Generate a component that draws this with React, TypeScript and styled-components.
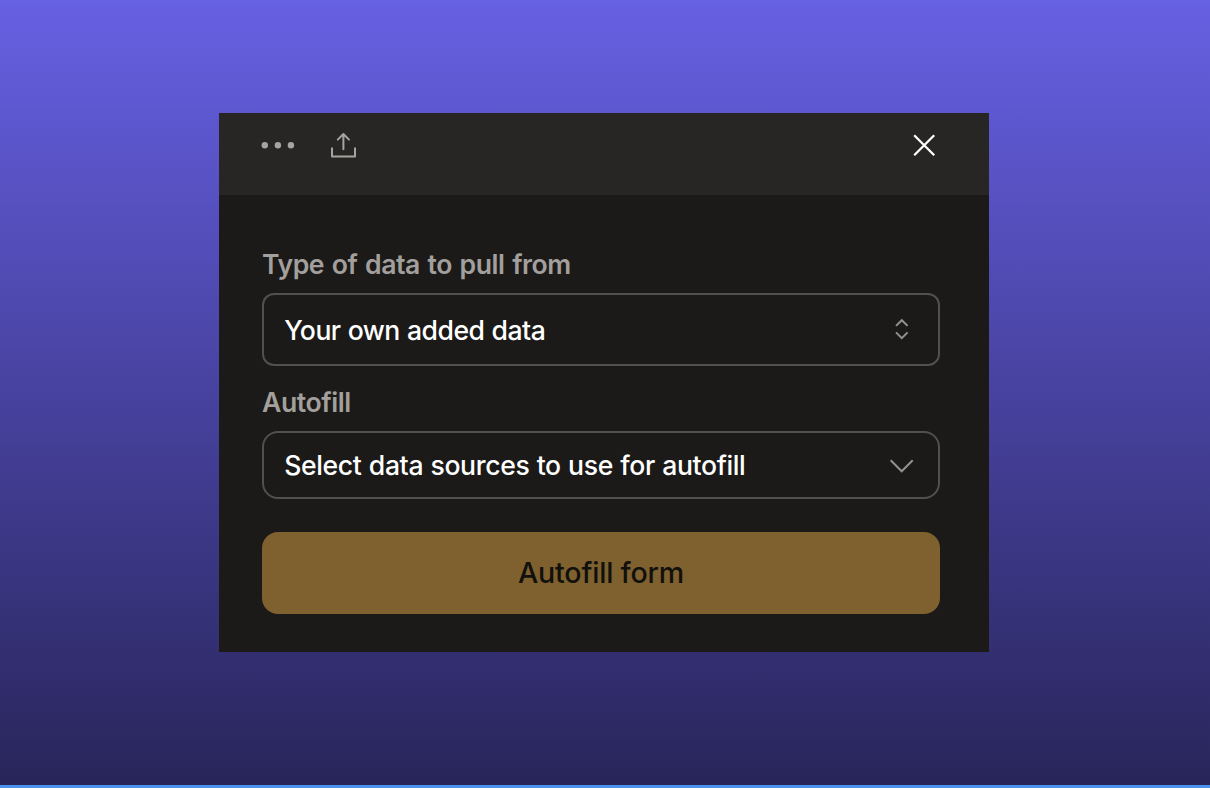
import React from 'react';
import styled, { createGlobalStyle } from 'styled-components';

const GlobalStyle = createGlobalStyle`
  * { box-sizing: border-box; }
  body { margin: 0; }
  button { font: inherit; border: 0; background: none; padding: 0; }
`;

const Page = styled.main`
  width: 100%;
  height: 100vh;
  padding: 113px 221px 0 219px;
  overflow: hidden;
  border-bottom: 3px solid #4993ec;
  background: linear-gradient(180deg, #6761e3 0%, #5d57cf 15%, #28255a 100%);
  font-family: Inter, 'Liberation Sans', sans-serif;
  font-weight: 500;
`;

const Panel = styled.section`
  display: flex;
  flex-direction: column;
  height: 538.5px;
  background: #1b1a18;
`;

const Toolbar = styled.header`
  display: flex;
  align-items: flex-start;
  height: 82px;
  padding: 16px 48px 0 42px;
  background: #272625;
`;

const IconButton = styled.button<{ $color: string; $push?: boolean }>`
  display: flex;
  color: ${(p) => p.$color};
  margin-left: ${(p) => (p.$push ? 'auto' : '0')};
`;

const Actions = styled.div`
  display: flex;
  gap: 32px;
`;

const Form = styled.div`
  display: flex;
  flex-direction: column;
  padding: 51px 49px 0 43px;
`;

const Label = styled.label<{ $top?: number }>`
  height: 36px;
  margin: ${(p) => p.$top ?? 0}px 0 10.5px 0;
  line-height: 36px;
  font-size: 26.6px;
  font-weight: 600;
  letter-spacing: -0.45px;
  word-spacing: 1.4px;
  color: #a29f9c;
  white-space: nowrap;
`;

const Select = styled.div<{ $height: number; $radius: number; $tracking: string; $drop?: number }>`
  display: flex;
  align-items: center;
  justify-content: space-between;
  height: ${(p) => p.$height}px;
  padding: ${(p) => p.$drop ?? 0}px 22.5px 0 20.2px;
  border: 2px solid #52504e;
  border-radius: ${(p) => p.$radius}px;
  font-size: 26.6px;
  letter-spacing: ${(p) => p.$tracking};
  word-spacing: 0.6px;
  color: #fff;
  white-space: nowrap;
`;

const Submit = styled.button`
  height: 82px;
  margin-top: 33px;
  padding-bottom: 2px;
  border-radius: 16px;
  background: #7f602f;
  color: #11100c;
  font-size: 28.6px;
  font-weight: 500;
  letter-spacing: -0.2px;
`;

const DotsIcon = () => (
  <svg width="36" height="32" viewBox="0 0 36 32" fill="currentColor">
    <circle cx="3.8" cy="16.2" r="3.2" />
    <circle cx="16.9" cy="16.2" r="3.2" />
    <circle cx="29.9" cy="16.2" r="3.2" />
  </svg>
);

const ShareIcon = () => (
  <svg width="30" height="32" viewBox="0 0 30 32" fill="none" stroke="currentColor" strokeWidth="2" strokeLinejoin="round" strokeLinecap="round">
    <path d="M3 19.2V27.4H26V19.2" />
    <path d="M14.4 20.2V5.2M8.8 10.6L14.4 5L20 10.6" />
  </svg>
);

const CloseIcon = () => (
  <svg width="32" height="32" viewBox="0 0 32 32" fill="none" stroke="currentColor" strokeWidth="2.3">
    <path d="M5.2 6.3L25.2 26.3M25.2 6.3L5.2 26.3" />
  </svg>
);

const UpDownIcon = () => (
  <svg width="28" height="28" viewBox="0 0 28 28" fill="none" stroke="#94918f" strokeWidth="2">
    <path d="M8 9.9L13.8 4.2L19.6 9.9M8 16.4L13.8 22.1L19.6 16.4" />
  </svg>
);

const ChevronIcon = () => (
  <svg width="28" height="28" viewBox="0 0 28 28" fill="none" stroke="#94918f" strokeWidth="2">
    <path d="M2.7 9.3L13.7 20.3L24.7 9.3" />
  </svg>
);

export default function App() {
  return (
    <>
      <GlobalStyle />
      <Page>
        <Panel>
          <Toolbar>
            <Actions>
              <IconButton $color="#a7a3a0" aria-label="More"><DotsIcon /></IconButton>
              <IconButton $color="#a7a3a0" aria-label="Share"><ShareIcon /></IconButton>
            </Actions>
            <IconButton $color="#fff" $push aria-label="Close"><CloseIcon /></IconButton>
          </Toolbar>
          <Form>
            <Label>Type of data to pull from</Label>
            <Select $height={73.5} $radius={12} $tracking="-0.53px" $drop={1}>
              <span>Your own added data</span>
              <UpDownIcon />
            </Select>
            <Label $top={18}>Autofill</Label>
            <Select $height={68.5} $radius={16} $tracking="-0.37px">
              <span>Select data sources to use for autofill</span>
              <ChevronIcon />
            </Select>
            <Submit>Autofill form</Submit>
          </Form>
        </Panel>
      </Page>
    </>
  );
}
